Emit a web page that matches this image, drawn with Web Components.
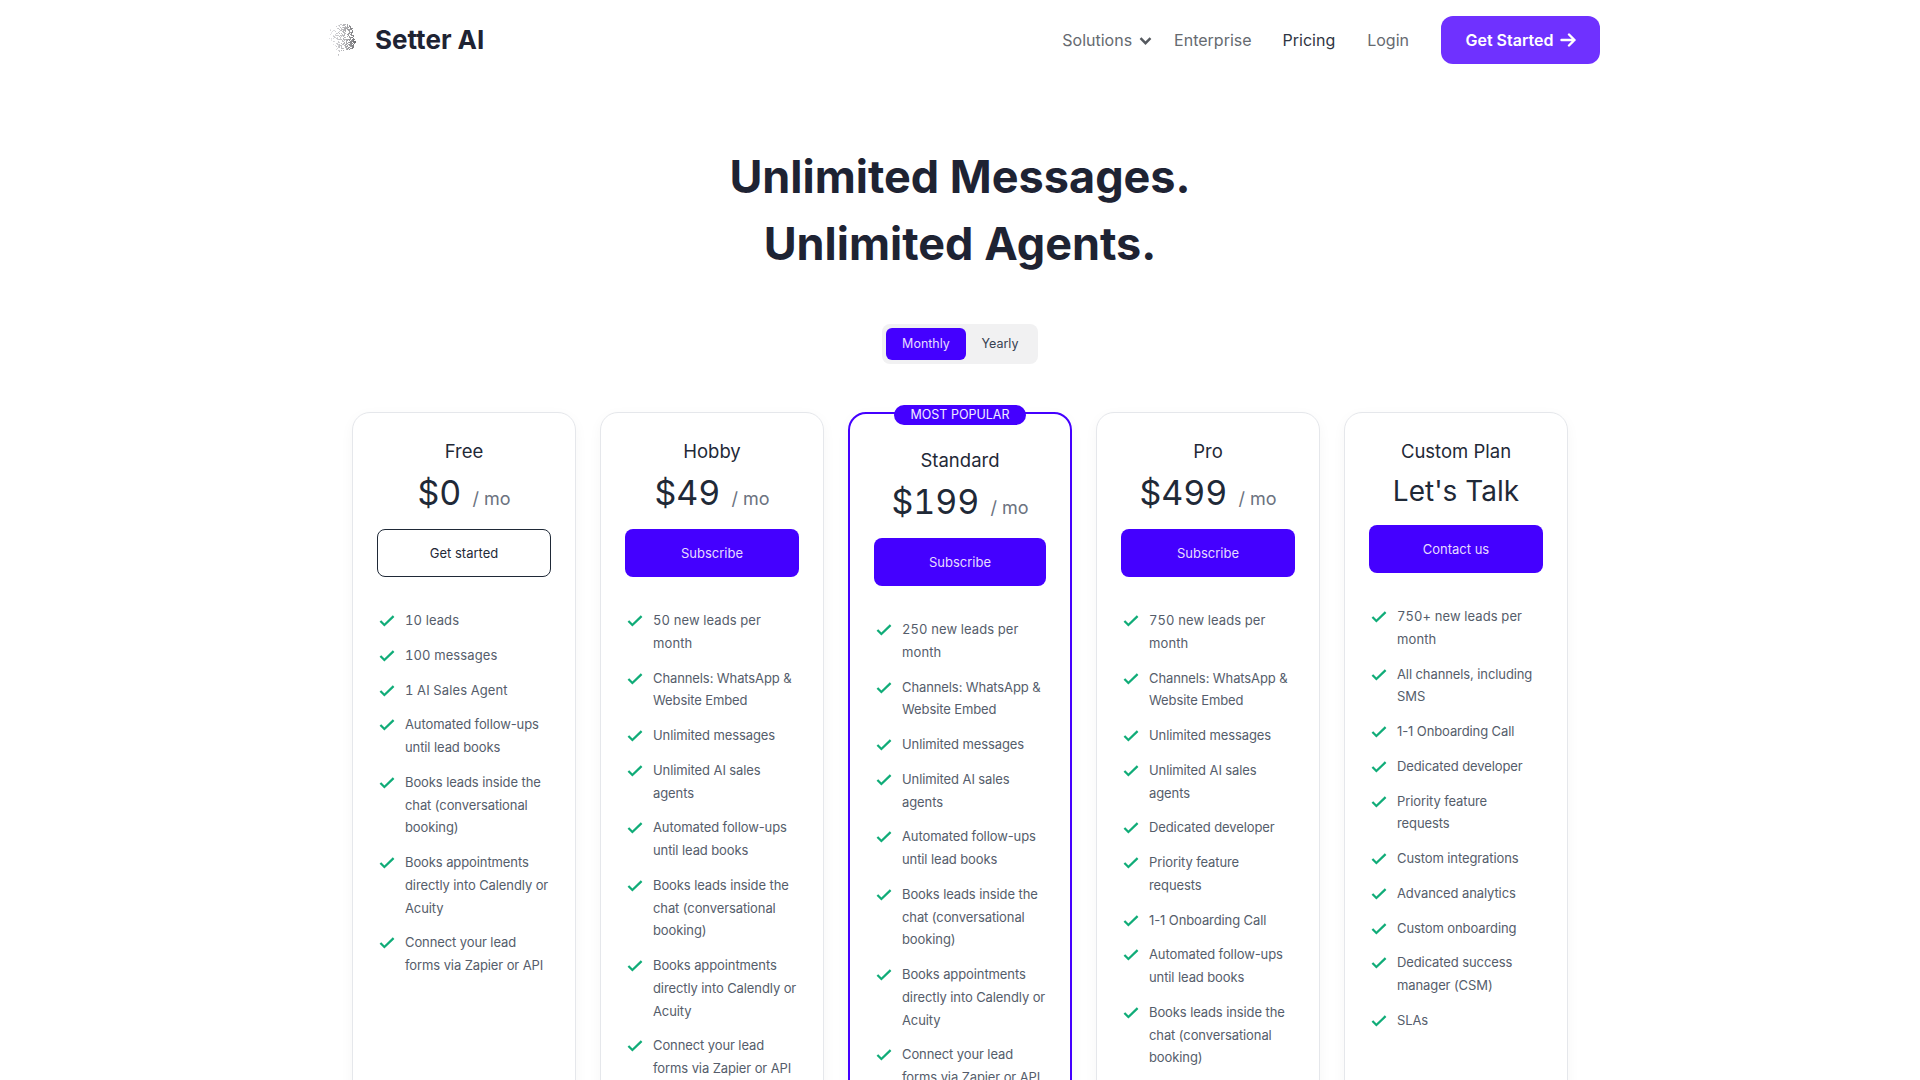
<!DOCTYPE html>
<html lang="en"><head><meta charset="utf-8"><title>Setter AI Pricing</title>
<style>
html,body{margin:0;background:#fff}
body{font-family:Inter,"Liberation Sans",sans-serif;color:#1f2937}
</style></head><body>
<site-nav></site-nav>
<pricing-page>
<plan-card name="Free" price="$0" cta="Get started" outline>
<feature-item n>10 leads</feature-item><feature-item n>100 messages</feature-item><feature-item n>1 AI Sales Agent</feature-item><feature-item>Automated follow-ups until lead books</feature-item><feature-item>Books leads inside the chat (conversational booking)</feature-item><feature-item>Books appointments directly into Calendly or Acuity</feature-item><feature-item>Connect your lead forms via Zapier or API</feature-item>
</plan-card>
<plan-card name="Hobby" price="$49" cta="Subscribe">
<feature-item n>50 new leads per month</feature-item><feature-item>Channels: WhatsApp &amp; Website Embed</feature-item><feature-item>Unlimited messages</feature-item><feature-item>Unlimited AI sales agents</feature-item><feature-item>Automated follow-ups until lead books</feature-item><feature-item>Books leads inside the chat (conversational booking)</feature-item><feature-item>Books appointments directly into Calendly or Acuity</feature-item><feature-item>Connect your lead forms via Zapier or API</feature-item>
</plan-card>
<plan-card name="Standard" price="$199" cta="Subscribe" popular>
<feature-item n>250 new leads per month</feature-item><feature-item>Channels: WhatsApp &amp; Website Embed</feature-item><feature-item>Unlimited messages</feature-item><feature-item>Unlimited AI sales agents</feature-item><feature-item>Automated follow-ups until lead books</feature-item><feature-item>Books leads inside the chat (conversational booking)</feature-item><feature-item>Books appointments directly into Calendly or Acuity</feature-item><feature-item>Connect your lead forms via Zapier or API</feature-item>
</plan-card>
<plan-card name="Pro" price="$499" cta="Subscribe">
<feature-item n>750 new leads per month</feature-item><feature-item>Channels: WhatsApp &amp; Website Embed</feature-item><feature-item>Unlimited messages</feature-item><feature-item>Unlimited AI sales agents</feature-item><feature-item>Dedicated developer</feature-item><feature-item>Priority feature requests</feature-item><feature-item>1-1 Onboarding Call</feature-item><feature-item>Automated follow-ups until lead books</feature-item><feature-item>Books leads inside the chat (conversational booking)</feature-item>
</plan-card>
<plan-card name="Custom Plan" talk="Let's Talk" cta="Contact us">
<feature-item n>750+ new leads per month</feature-item><feature-item>All channels, including SMS</feature-item><feature-item>1-1 Onboarding Call</feature-item><feature-item>Dedicated developer</feature-item><feature-item>Priority feature requests</feature-item><feature-item>Custom integrations</feature-item><feature-item>Advanced analytics</feature-item><feature-item>Custom onboarding</feature-item><feature-item>Dedicated success manager (CSM)</feature-item><feature-item>SLAs</feature-item>
</plan-card>
</pricing-page>
<script>
function faceDots(){
  let s=11,r=()=>(s=(s*16807)%2147483647)/2147483647,out='';
  const poly=[[6,4],[14,2],[22,2],[26,5],[27,12],[28,16],[30,20],[28,22],[27,26],[23,28],[18,28],[14,31],[11,35],[12,29],[8,26],[3,18],[1,10]];
  const inside=(x,y)=>{let c=false;for(let i=0,j=poly.length-1;i<poly.length;j=i++){const[a,b]=poly[i],[d,e]=poly[j];if((b>y)!=(e>y)&&x<(d-a)*(y-b)/(e-b)+a)c=!c}return c};
  for(let y=1;y<35;y+=1)for(let x=0;x<30;x+=1){
    if(!inside(x,y))continue;
    const t=x/28;
    if(r()>.1+t*.7)continue;
    const g=Math.round(235-t*t*105-r()*25);
    out+=`<rect x="${x}" y="${y}" width="1" height="1" fill="rgb(${g},${g},${g+3})"/>`;
  }
  return out;
}
const css=(s)=>`<style>${s}</style>`;
customElements.define('site-nav',class extends HTMLElement{
  constructor(){super();this.attachShadow({mode:'open'}).innerHTML=css(`
  :host{display:block;width:1280px;margin:0 auto;box-sizing:border-box;padding:16px 0 0 6px;font:16px/24px Inter,"Liberation Sans",sans-serif}
  nav{display:flex;align-items:center;justify-content:space-between;height:48px}
  .brand{display:flex;align-items:center;gap:19px;font-size:26px;font-weight:700;color:#1e2333}
  .brand svg{display:block;width:30px;height:36px}
  ul{display:flex;align-items:center;gap:32px;list-style:none;margin:0;padding:0;color:#666a70}
  .sol{display:flex;align-items:center;gap:7px;margin-right:-10px}
  .sol svg{display:block;margin-top:1px}
  .ent{margin-right:-1px}
  .cur{color:#2f3542}
  .btn{display:flex;align-items:center;justify-content:center;gap:6px;width:159px;height:48px;border-radius:12px;background:#6f31ff;color:#fff;font-weight:600}
  .btn svg{display:block}
  `)+`<nav><div class="brand"><svg viewBox="0 0 30 36" aria-hidden="true">${faceDots()}</svg><span>Setter AI</span></div>
  <ul><li class="sol">Solutions <svg width="13" height="10" viewBox="0 0 13 10" fill="none" stroke="#55595f" stroke-width="2.4"><path d="M1.5 2.2l5 5 5-5"/></svg></li><li class="ent">Enterprise</li><li class="cur">Pricing</li><li>Login</li>
  <li class="btn">Get Started <svg width="16" height="16" viewBox="0 0 16 16" fill="none" stroke="#fff" stroke-width="2.4" stroke-linecap="round" stroke-linejoin="round"><path d="M1.5 8h13M9 2.5L14.5 8 9 13.5"/></svg></li></ul></nav>`;}
});
customElements.define('pricing-page',class extends HTMLElement{
  constructor(){super();this.attachShadow({mode:'open'}).innerHTML=css(`
  :host{display:block;font-family:Inter,"Liberation Sans",sans-serif}
  h1{margin:79px 0 0;text-align:center;font-size:45px;line-height:67px;font-weight:700;color:#1e2333}
  .toggle{display:flex;justify-content:center;margin:47px 0 48px}
  .grid{display:grid;grid-template-columns:repeat(5,224px);gap:24px;width:1216px;margin:0 auto;align-items:stretch}
  `)+`<h1>Unlimited Messages.<br>Unlimited Agents.</h1><div class="toggle"><billing-toggle></billing-toggle></div><div class="grid"><slot></slot></div>`;}
});
customElements.define('billing-toggle',class extends HTMLElement{
  constructor(){super();this.attachShadow({mode:'open'}).innerHTML=css(`
  :host{display:flex;box-sizing:border-box;width:156px;height:40px;padding:4px;border-radius:8px;background:#f1f1f2;font:12.5px/32px Inter,"Liberation Sans",sans-serif;color:#374151}
  span{text-align:center}
  .on{width:80px;background:#4400ff;color:#e6dcff;border-radius:6px}
  .off{flex:1}
  `)+`<span class="on">Monthly</span><span class="off">Yearly</span>`;}
});
customElements.define('plan-card',class extends HTMLElement{
  constructor(){super();const a=n=>this.getAttribute(n);const pop=this.hasAttribute('popular');
  const price=a('talk')?`<div class="talk">${a('talk')}</div>`:`<div class="price"><b>${a('price')}</b><i>/ mo</i></div>`;
  this.attachShadow({mode:'open'}).innerHTML=css(`
  :host{display:block;position:relative;box-sizing:border-box;border:1px solid #e5e7eb;border-radius:18px;padding:24px;background:#fff;box-shadow:0 4px 14px rgba(0,0,0,.04);font-family:Inter,"Liberation Sans",sans-serif;color:#1f2937}
  :host([popular]){border:2px solid #4400ff;padding-top:32px}
  .badge{position:absolute;top:-9px;left:50%;transform:translateX(-50%);width:132px;height:20px;border-radius:10px;background:#4400ff;color:#f1ebff;font-size:12.5px;line-height:20px;text-align:center;white-space:nowrap}
  h3{margin:0;font-size:18.5px;line-height:28px;font-weight:400;text-align:center;color:#1f2937}
  .price{display:flex;justify-content:center;align-items:baseline;margin-top:8px;height:40px;line-height:40px}
  .price b{font-weight:400;font-size:34px;font-variant-numeric:tabular-nums;color:#1f2937}
  .price i{font-style:normal;font-size:18px;color:#6b7280;margin-left:11px}
  .talk{margin-top:8px;height:36px;line-height:36px;font-size:28px;text-align:center;color:#1f2937}
  .cta{box-sizing:border-box;height:48px;margin-top:16px;border-radius:8px;background:#4400ff;color:#e6dcff;font-size:13px;line-height:48px;text-align:center}
  .cta.o{background:#fff;color:#1f2937;border:1px solid #1f2937;line-height:46px}
  .list{display:flex;flex-direction:column;gap:12px;margin-top:32px}
  `)+(pop?`<div class="badge">MOST POPULAR</div>`:'')+`<h3>${a('name')}</h3>${price}<div class="cta${this.hasAttribute('outline')?' o':''}">${a('cta')}</div><div class="list"><slot></slot></div>`;}
});
customElements.define('feature-item',class extends HTMLElement{
  constructor(){super();this.attachShadow({mode:'open'}).innerHTML=css(`
  :host{display:flex;gap:8px;align-items:flex-start;font-size:13px;letter-spacing:-.1px;line-height:22.75px;color:#555d6b}
  :host([n]){font-variant-numeric:tabular-nums;letter-spacing:.1px}
  svg{flex:none;width:20px;height:20px;margin-top:1px}
  `)+`<svg viewBox="0 0 20 20" fill="none" stroke="#10ac78" stroke-width="2.3"><path d="M3.4 11l4 4 9.2-8.8"/></svg><span><slot></slot></span>`;}
});
</script>
</body></html>
